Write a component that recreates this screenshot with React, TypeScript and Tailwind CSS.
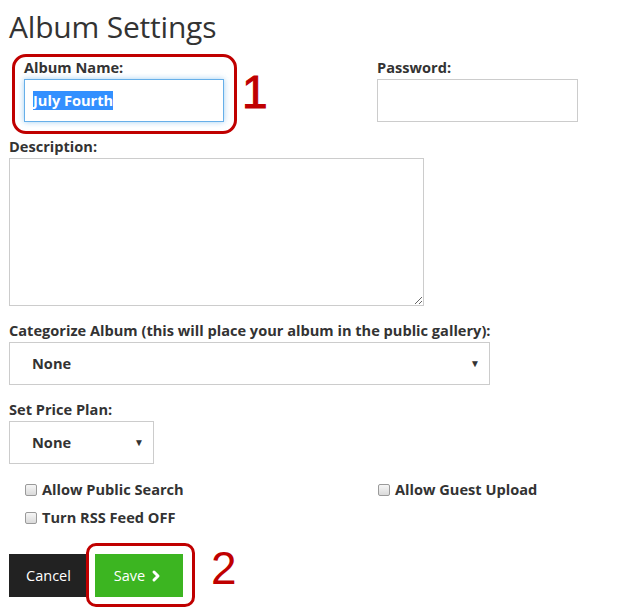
import React from 'react';
import { ChevronRight } from 'lucide-react';

const font = { fontFamily: '"Open Sans", "Noto Sans", Arial, sans-serif' };

const Label: React.FC<{ children: React.ReactNode; className?: string }> = ({ children, className }) => (
  <div className={`text-[14.6px] font-bold leading-[18px] text-[#333] ${className ?? ''}`}>{children}</div>
);

const SelectBox: React.FC<{ width: string }> = ({ width }) => (
  <div className={`relative ${width} h-[43px] border border-[#ccc] bg-white flex items-center pl-[22px]`}>
    <span className="text-[14.6px] font-bold text-[#333]">None</span>
    <span className="absolute right-[9px] top-[13px] text-[10px] text-[#333]">▼</span>
  </div>
);

const Check: React.FC<{ label: string }> = ({ label }) => (
  <label className="flex items-center gap-[5px] h-[28px]">
    <span className="w-[12px] h-[12px] rounded-[2px] border border-[#9a9a9a] bg-gradient-to-b from-[#f6f6f6] to-[#dadada]" />
    <span className="text-[14.6px] font-bold text-[#333]">{label}</span>
  </label>
);

export default function App() {
  return (
    <div className="relative w-[620px] h-[616px] bg-white pl-[9px] pt-[8px]" style={font}>
      <h1 className="text-[30px] leading-[38px] font-normal text-[#333] tracking-[-0.2px]">Album Settings</h1>

      {/* name / password row */}
      <div className="flex mt-[12px] pl-[15px]">
        <div className="w-[353px]">
          <Label>Album Name:</Label>
          <div className="mt-[3px] w-[200px] h-[43px] border border-[#66afe9] shadow-[0_0_6px_rgba(102,175,233,0.6)] flex items-center pl-[8px]">
            <span className="bg-[#3390ff] text-white text-[14.6px] font-bold leading-[19px]">July Fourth</span>
          </div>
        </div>
        <div>
          <Label>Password:</Label>
          <div className="mt-[3px] w-[201px] h-[43px] border border-[#ccc]" />
        </div>
      </div>

      <Label className="mt-[15px]">Description:</Label>
      <textarea className="block mt-[3px] w-[415px] h-[148px] border border-[#ccc] outline-none" />

      <Label className="mt-[15px]">Categorize Album (this will place your album in the public gallery):</Label>
      <div className="mt-[3px]">
        <SelectBox width="w-[481px]" />
      </div>

      <Label className="mt-[15px]">Set Price Plan:</Label>
      <div className="mt-[3px]">
        <SelectBox width="w-[145px]" />
      </div>

      <div className="flex pl-[16px] mt-[12px]">
        <div className="w-[353px]">
          <Check label="Allow Public Search" />
          <Check label="Turn RSS Feed OFF" />
        </div>
        <div>
          <Check label="Allow Guest Upload" />
        </div>
      </div>

      <div className="flex gap-[7px] mt-[22px]">
        <button className="w-[79px] h-[43px] bg-[#222] text-white text-[14.5px]">Cancel</button>
        <button className="w-[88px] h-[43px] bg-[#3cb521] text-white text-[14.5px] flex items-center justify-center gap-[3px]">
          Save <ChevronRight size={16} strokeWidth={4.5} />
        </button>
      </div>

      {/* annotations */}
      <div className="absolute left-[12px] top-[54px] w-[225px] h-[80px] border-[3px] border-[#c00000] rounded-[14px]" />
      <div className="absolute left-[242px] top-[62px] text-[46px] leading-[60px] text-[#c00000]" style={{ fontFamily: '"Liberation Sans", Arial, sans-serif', WebkitTextStroke: '1px #c00000' }}>1</div>
      <div className="absolute left-[86px] top-[543px] w-[109px] h-[64px] border-[3px] border-[#c00000] rounded-[10px]" />
      <div className="absolute left-[211px] top-[538px] text-[46px] leading-[60px] text-[#c00000]" style={{ fontFamily: '"Liberation Sans", Arial, sans-serif' }}>2</div>
    </div>
  );
}
